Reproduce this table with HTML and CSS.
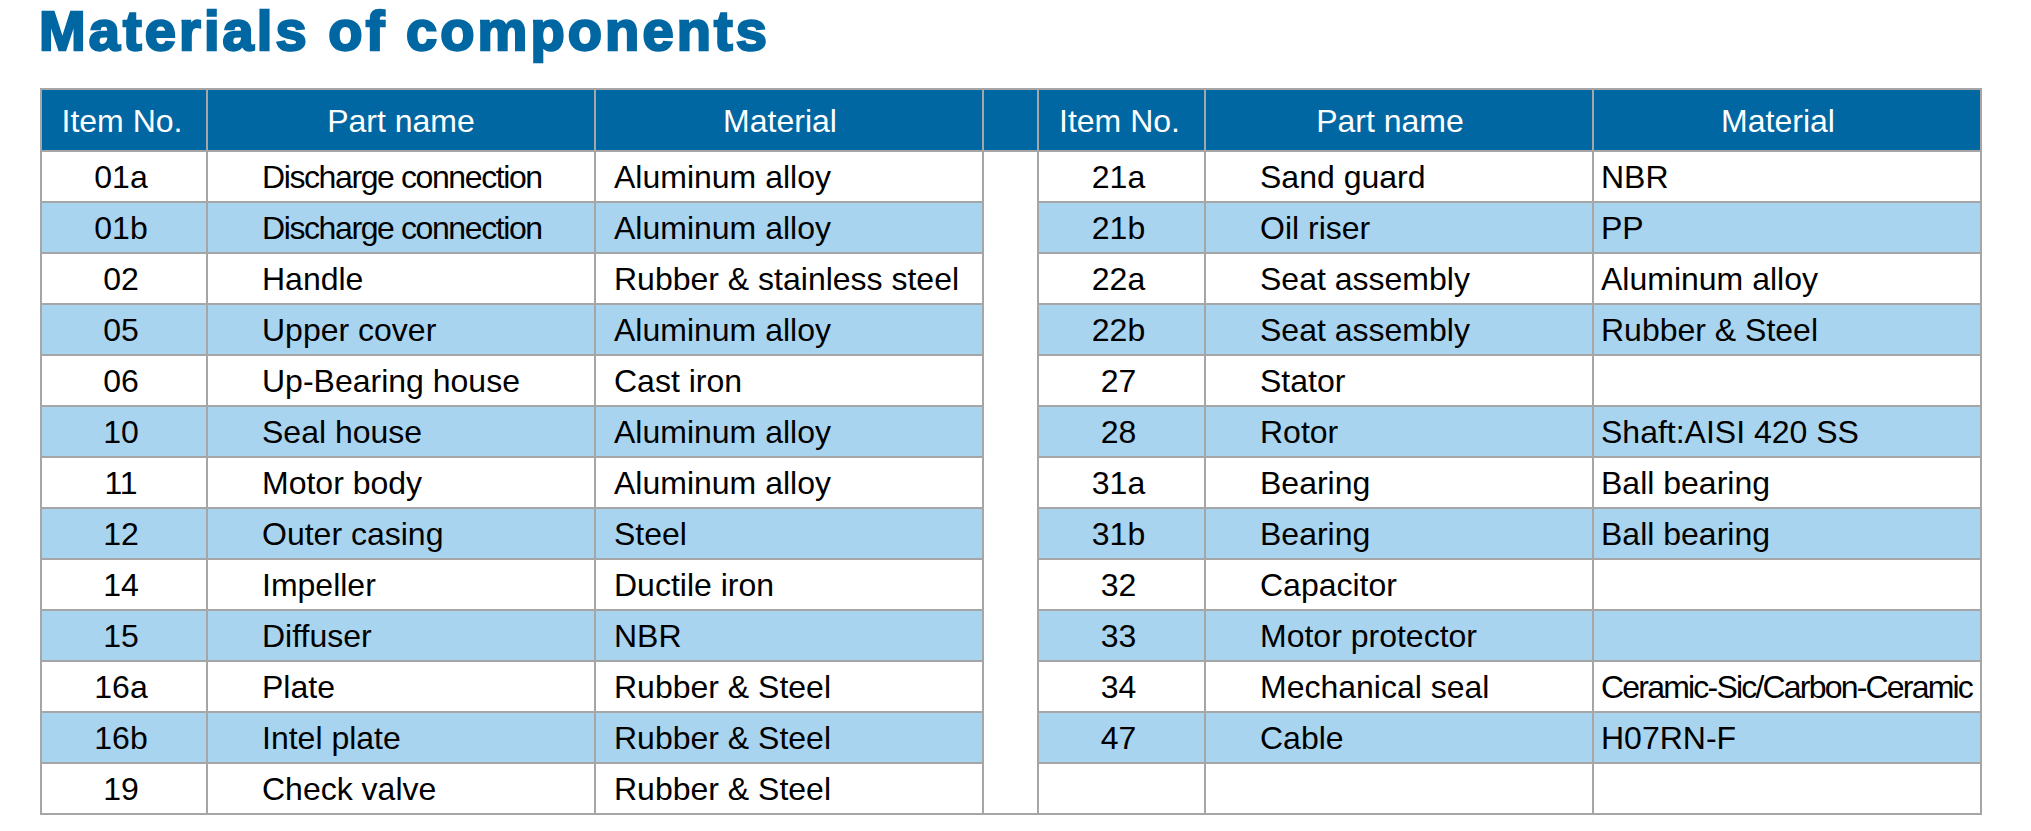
FILE: index.html
```html
<!DOCTYPE html>
<html lang="en">
<head>
<meta charset="utf-8">
<title>Materials of components</title>
<link rel="stylesheet" href="styles.css">
</head>
<body>
<div class="page">
  <h1 class="title">Materials of components</h1>
  <table class="materials">
    <colgroup>
      <col class="c-no"><col class="c-part"><col class="c-mat">
      <col class="c-gap">
      <col class="c-no2"><col class="c-part"><col class="c-mat">
    </colgroup>
    <thead>
      <tr>
        <th class="h-no">Item No.</th><th class="h-part">Part name</th><th class="h-mat">Material</th>
        <th class="gap"></th>
        <th class="h-no">Item No.</th><th class="h-part h-part-r">Part name</th><th class="h-mat">Material</th>
      </tr>
    </thead>
    <tbody>
      <tr>
        <td class="no">01a</td><td class="part tight">Discharge connection</td><td class="mat">Aluminum alloy</td>
        <td class="gap" rowspan="13"></td>
        <td class="no">21a</td><td class="part">Sand guard</td><td class="mat r">NBR</td>
      </tr>
      <tr class="alt">
        <td class="no">01b</td><td class="part tight">Discharge connection</td><td class="mat">Aluminum alloy</td>
        <td class="no">21b</td><td class="part">Oil riser</td><td class="mat r">PP</td>
      </tr>
      <tr>
        <td class="no">02</td><td class="part">Handle</td><td class="mat">Rubber &amp; stainless steel</td>
        <td class="no">22a</td><td class="part">Seat assembly</td><td class="mat r">Aluminum alloy</td>
      </tr>
      <tr class="alt">
        <td class="no">05</td><td class="part">Upper cover</td><td class="mat">Aluminum alloy</td>
        <td class="no">22b</td><td class="part">Seat assembly</td><td class="mat r">Rubber &amp; Steel</td>
      </tr>
      <tr>
        <td class="no">06</td><td class="part">Up-Bearing house</td><td class="mat">Cast iron</td>
        <td class="no">27</td><td class="part">Stator</td><td class="mat r"></td>
      </tr>
      <tr class="alt">
        <td class="no">10</td><td class="part">Seal house</td><td class="mat">Aluminum alloy</td>
        <td class="no">28</td><td class="part">Rotor</td><td class="mat r">Shaft:AISI 420 SS</td>
      </tr>
      <tr>
        <td class="no">11</td><td class="part">Motor body</td><td class="mat">Aluminum alloy</td>
        <td class="no">31a</td><td class="part">Bearing</td><td class="mat r">Ball bearing</td>
      </tr>
      <tr class="alt">
        <td class="no">12</td><td class="part">Outer casing</td><td class="mat">Steel</td>
        <td class="no">31b</td><td class="part">Bearing</td><td class="mat r">Ball bearing</td>
      </tr>
      <tr>
        <td class="no">14</td><td class="part">Impeller</td><td class="mat">Ductile iron</td>
        <td class="no">32</td><td class="part">Capacitor</td><td class="mat r"></td>
      </tr>
      <tr class="alt">
        <td class="no">15</td><td class="part">Diffuser</td><td class="mat">NBR</td>
        <td class="no">33</td><td class="part">Motor protector</td><td class="mat r"></td>
      </tr>
      <tr>
        <td class="no">16a</td><td class="part">Plate</td><td class="mat">Rubber &amp; Steel</td>
        <td class="no">34</td><td class="part">Mechanical seal</td><td class="mat r tighter">Ceramic-Sic/Carbon-Ceramic</td>
      </tr>
      <tr class="alt">
        <td class="no">16b</td><td class="part">Intel plate</td><td class="mat">Rubber &amp; Steel</td>
        <td class="no">47</td><td class="part">Cable</td><td class="mat r">H07RN-F</td>
      </tr>
      <tr>
        <td class="no">19</td><td class="part">Check valve</td><td class="mat">Rubber &amp; Steel</td>
        <td class="no"></td><td class="part"></td><td class="mat r"></td>
      </tr>
    </tbody>
  </table>
</div>
</body>
</html>
```

FILE: styles.css
```css
html, body {
  margin: 0;
  padding: 0;
  background: #ffffff;
}

.page {
  padding: 3px 0 0 40px;
  font-family: "Liberation Sans", Arial, sans-serif;
}

.title {
  margin: 0 0 0 -1px;
  font-size: 56px;
  line-height: 55px;
  font-weight: bold;
  color: #0067a2;
  letter-spacing: 3.1px;
  -webkit-text-stroke: 2.4px #0067a2;
}

.materials {
  margin-top: 30px;
  border-collapse: collapse;
  table-layout: fixed;
  width: 1942px;
  font-size: 32px;
  color: #000000;
}

.c-no { width: 166px; }
.c-no2 { width: 167px; }
.c-part { width: 388px; }
.c-mat { width: 388px; }
.c-gap { width: 55px; }

.materials th,
.materials td {
  border: 2px solid #a6a6a6;
  padding: 0;
  white-space: nowrap;
  overflow: hidden;
}

.materials th {
  height: 58px;
  padding-top: 2px;
  background: #0067a2;
  color: #ffffff;
  font-weight: normal;
  text-align: center;
  vertical-align: middle;
}

.materials th.h-no {
  padding-right: 4px;
}

.materials th.h-mat {
  padding-right: 18px;
}

.materials th.h-part-r {
  padding-right: 18px;
}

.materials td {
  height: 48px;
  padding-top: 1px;
  background: #ffffff;
  vertical-align: middle;
}

.materials tr.alt td {
  background: #a9d4ef;
}

.materials td.gap {
  background: #ffffff;
}

.materials td.no {
  text-align: center;
  padding-right: 6px;
}

.materials td.part {
  text-align: left;
  padding-left: 54px;
}

.materials td.mat {
  text-align: left;
  padding-left: 18px;
}

.materials td.mat.r {
  padding-left: 7px;
}

.tight {
  letter-spacing: -1.4px;
}

.tighter {
  letter-spacing: -1.8px;
}
```
